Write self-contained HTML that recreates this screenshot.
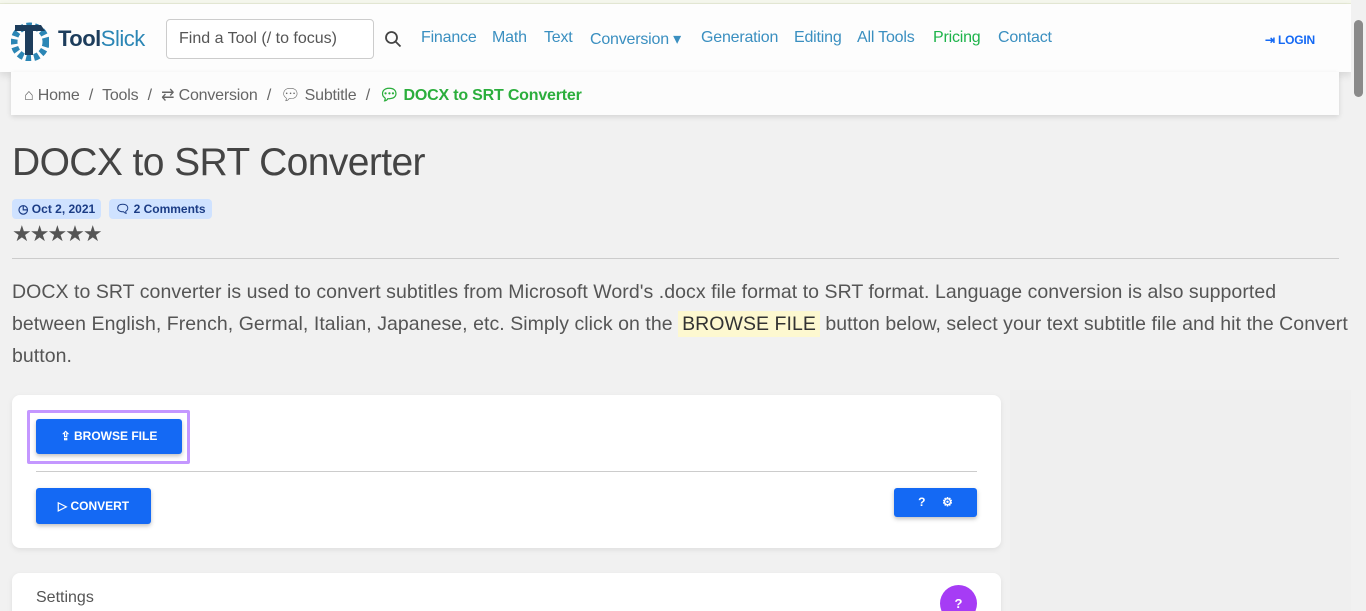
<!DOCTYPE html>
<html><head><meta charset="utf-8"><style>
*{box-sizing:border-box;margin:0;padding:0}
html,body{width:1366px;height:611px;overflow:hidden}
body{background:#f1f1f1;font-family:"Liberation Sans",sans-serif;color:#444;position:relative}
.top{position:absolute;left:0;top:0;width:1351px;height:4px;background:#f6f8ee;border-bottom:1px solid #e8ecd8}
.nav{position:absolute;left:0;top:4px;width:1351px;height:68px;background:#fdfdfd;box-shadow:0 3px 8px rgba(0,0,0,.12)}
.nav a{position:absolute;top:25px;font-size:16px;color:#3a8fc0;text-decoration:none;letter-spacing:-.2px}
.search{position:absolute;left:166px;top:15px;width:208px;height:40px;border:1px solid #ccc;border-radius:4px;background:#fff;font-size:16px;color:#555;padding:10px 12px}
.bc{position:absolute;left:11px;top:72px;width:1328px;height:43px;background:#fcfcfc;box-shadow:0 2px 5px rgba(0,0,0,.12);font-size:16px;color:#666;padding:13px 13px;white-space:nowrap;letter-spacing:-.2px}
.bc span{margin-right:5px}
h1{position:absolute;left:12px;top:141px;font-size:39px;font-weight:normal;color:#444;letter-spacing:-.6px}
.badge{position:absolute;top:199px;height:20px;background:#cfe2ff;border-radius:4px;font-size:12px;font-weight:bold;color:#1b3c85;padding:3px 6px}
.stars{position:absolute;left:12px;top:221px;font-size:22px;color:#555;letter-spacing:-2px}
.hr{position:absolute;left:12px;top:258px;width:1327px;height:1px;background:#ccc}
.p{position:absolute;left:12px;top:276px;width:1340px;font-size:19.5px;line-height:32px;color:#555;white-space:nowrap;letter-spacing:.05px}
.hl{background:#fdf8d0;padding:2px 4px;color:#333}
.card{position:absolute;left:12px;width:989px;background:#fff;border-radius:8px;box-shadow:0 2px 6px rgba(0,0,0,.08)}
.btn{position:absolute;background:#1469f4;color:#fff;font-size:12px;font-weight:bold;border-radius:3px;box-shadow:0 2px 4px rgba(0,0,0,.25);text-align:center}
.sb{position:absolute;right:0;top:0;width:15px;height:611px;background:#f1f1f1}
</style></head><body>
<div class="top"></div>
<div class="nav">
<svg style="position:absolute;left:11px;top:13px" width="38" height="44" viewBox="0 0 38 44"><circle cx="19" cy="25" r="16" fill="none" stroke="#2b86b5" stroke-width="7" stroke-dasharray="5 3"/><path d="M4 8h26l4 6H22v24h-8V14H4z" fill="#1d3d5c"/></svg>
<div style="position:absolute;left:58px;top:22px;font-size:22px;font-weight:bold;color:#1d3d5c;letter-spacing:-.5px">Tool<span style="font-weight:normal;color:#2b86b5">Slick</span></div>
<div class="search">Find a Tool (/ to focus)</div>
<svg style="position:absolute;left:384px;top:26px" width="18" height="18" viewBox="0 0 18 18"><circle cx="7.5" cy="7.5" r="5.5" fill="none" stroke="#444" stroke-width="1.8"/><path d="M11.5 11.5l5 5" stroke="#444" stroke-width="1.8"/></svg>
<a style="left:421px">Finance</a><a style="left:492px">Math</a><a style="left:544px">Text</a><a style="left:590px">Conversion ▾</a><a style="left:701px">Generation</a><a style="left:794px">Editing</a><a style="left:857px">All Tools</a><a style="left:933px;color:#1db34a">Pricing</a><a style="left:998px">Contact</a>
<a style="left:1265px;top:29px;font-size:12px;font-weight:bold;color:#1469f4">⇥ LOGIN</a>
</div>
<div class="bc"><span>⌂ Home</span> <span>/</span> <span>Tools</span> <span>/</span> <span>⇄ Conversion</span> <span>/</span> <span>💬︎ Subtitle</span> <span>/</span> <b style="color:#2bae3c">💬︎ DOCX to SRT Converter</b></div>
<h1>DOCX to SRT Converter</h1>
<div class="badge" style="left:12px">◷ Oct 2, 2021</div>
<div class="badge" style="left:109px">🗨︎ 2 Comments</div>
<div class="stars">★★★★★</div>
<div class="hr"></div>
<div class="p">DOCX to SRT converter is used to convert subtitles from Microsoft Word's .docx file format to SRT format. Language conversion is also supported<br>between English, French, Germal, Italian, Japanese, etc. Simply click on the <span class="hl">BROWSE FILE</span> button below, select your text subtitle file and hit the Convert<br>button.</div>
<div class="card" style="top:395px;height:153px">
<div style="position:absolute;left:15px;top:15px;width:163px;height:54px;border:3px solid #c497ff;border-radius:2px"></div>
<div class="btn" style="left:24px;top:24px;width:146px;height:35px;line-height:35px">⇪ BROWSE FILE</div>
<div style="position:absolute;left:24px;top:76px;width:941px;height:1px;background:#ccc"></div>
<div class="btn" style="left:24px;top:93px;width:115px;height:36px;line-height:36px">▷ CONVERT</div>
<div class="btn" style="left:882px;top:93px;width:83px;height:29px;line-height:29px">?&nbsp;&nbsp;&nbsp;&nbsp;&nbsp;⚙</div>
</div>
<div class="card" style="top:573px;height:60px">
<div style="position:absolute;left:24px;top:16px;font-size:16px;color:#555">Settings</div>
<div style="position:absolute;left:928px;top:12px;width:37px;height:37px;border-radius:50%;background:#a63cf5;color:#fff;text-align:center;line-height:37px;font-weight:bold;font-size:13px">?</div>
</div>
<div style="position:absolute;left:1010px;top:390px;width:341px;height:221px;background:#efefef"></div>
<div class="sb"><div style="position:absolute;left:3px;top:20px;width:9px;height:77px;background:#8a8a8a;border-radius:5px"></div></div>
</body></html>
